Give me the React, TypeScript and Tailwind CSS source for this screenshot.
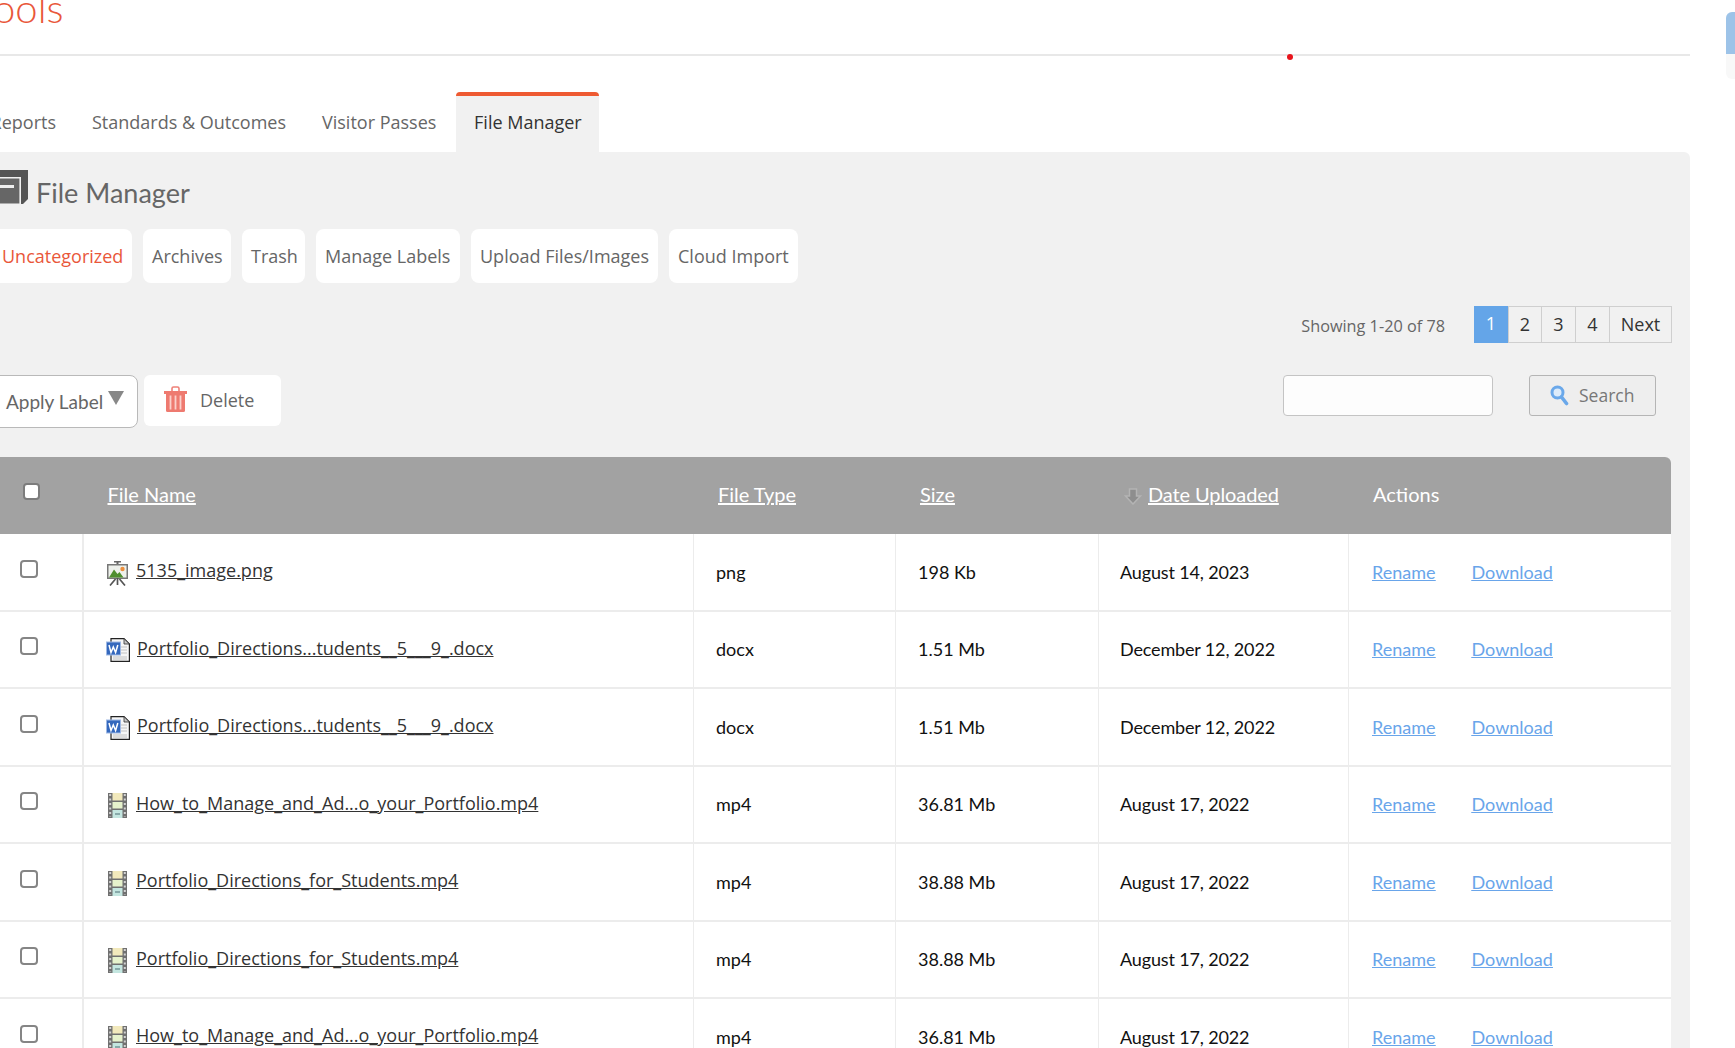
const rowGrid = 'grid grid-cols-[101px_610px_202px_203px_250px_322px] w-[1688px]'

const files = [
  { name: '5135_image.png', type: 'png', size: '198 Kb', date: 'August 14, 2023', icon: 'image' },
  { name: 'Portfolio_Directions...tudents__5___9_.docx', type: 'docx', size: '1.51 Mb', date: 'December 12, 2022', icon: 'word' },
  { name: 'Portfolio_Directions...tudents__5___9_.docx', type: 'docx', size: '1.51 Mb', date: 'December 12, 2022', icon: 'word' },
  { name: 'How_to_Manage_and_Ad...o_your_Portfolio.mp4', type: 'mp4', size: '36.81 Mb', date: 'August 17, 2022', icon: 'film' },
  { name: 'Portfolio_Directions_for_Students.mp4', type: 'mp4', size: '38.88 Mb', date: 'August 17, 2022', icon: 'film' },
  { name: 'Portfolio_Directions_for_Students.mp4', type: 'mp4', size: '38.88 Mb', date: 'August 17, 2022', icon: 'film' },
  { name: 'How_to_Manage_and_Ad...o_your_Portfolio.mp4', type: 'mp4', size: '36.81 Mb', date: 'August 17, 2022', icon: 'film' },
]

function ImageIcon() {
  return (
    <svg width="23" height="25" viewBox="0 0 23 25" className="shrink-0">
      <rect x="8" y="0" width="7" height="1.5" fill="#666" />
      <rect x="10.5" y="1" width="2" height="3" fill="#666" />
      <rect x="1" y="3" width="21" height="15" fill="#777" />
      <rect x="2.5" y="4.5" width="18" height="12" fill="#eef1ec" />
      <path d="M3 16.5l5-8 3.5 4.500 2-2 4 5.500z" fill="#4f8f2f" />
      <circle cx="16.500" cy="8" r="2.200" fill="#ec8f3c" />
      <path d="M11.500 17v7M9.500 18l-5.500 6.500M13.500 18l5.500 6.500" stroke="#555" strokeWidth="1.700" fill="none" />
    </svg>
  )
}

function WordIcon() {
  return (
    <svg width="24" height="24" viewBox="0 0 24 24" className="shrink-0">
      <path d="M5 0.600h13l5.400 5.400v17.400H5z" fill="#f6f6f6" stroke="#222" strokeWidth="1.200" />
      <path d="M18 0.600l5.400 5.400H18z" fill="#c4c4c4" stroke="#333" strokeWidth="0.800" />
      <path d="M15 9h6M15 12h6M15 15h6M7 19h14M7 21h14" stroke="#c2c2c2" strokeWidth="1" />
      <rect x="0.500" y="4" width="14" height="13" fill="#3468bd" stroke="#9db8e4" />
      <path d="M3 7l2 7.500 2.300-5.500 2.300 5.500L11.800 7" fill="none" stroke="#fff" strokeWidth="1.500" />
    </svg>
  )
}

function FilmIcon() {
  return (
    <svg width="23" height="25" viewBox="0 0 23 25" className="shrink-0">
      <rect x="2" y="0" width="19" height="25" fill="#707070" />
      <rect x="6.500" y="0" width="10" height="7.500" fill="#f2e9bc" />
      <rect x="6.500" y="9" width="10" height="6.500" fill="#e6f2cc" />
      <rect x="6.500" y="17" width="10" height="8" fill="#c4e6e0" />
      <path d="M9 21h5" stroke="#8aa" strokeWidth="2" />
      <path d="M4.200 1v23M18.800 1v23" stroke="#d4d4d4" strokeWidth="2" strokeDasharray="2 2.500" />
    </svg>
  )
}

function FileIcon({ kind }: { kind: string }) {
  if (kind === 'image') return <ImageIcon />
  if (kind === 'word') return <WordIcon />
  return <FilmIcon />
}

function RowCheckbox() {
  return (
    <input
      type="checkbox"
      readOnly
      className="appearance-none w-[18px] h-[18px] bg-white border-2 border-[#858585] rounded-[4px] block"
    />
  )
}

function FileRow({ file }: { file: (typeof files)[number] }) {
  return (
    <div className={`${rowGrid} h-[77.5px] bg-white border-b-2 border-[#ececec] font-['Lato',sans-serif] text-[18px] text-[#111]`}>
      <div className="border-r-2 border-[#ececec] pl-[37px] pt-[25.5px]">
        <RowCheckbox />
      </div>
      <div className="border-r border-[#ececec] pl-[22px] pt-[25.5px] flex items-start gap-[7px]">
        <span className="mt-[1px]">
          <FileIcon kind={file.icon} />
        </span>
        <a className="font-['Open_Sans',sans-serif] text-[18px] leading-[24px] -mt-[1.5px] text-[#333] underline whitespace-nowrap">
          {file.name}
        </a>
      </div>
      <div className="border-r border-[#ececec] pl-[22px] pt-[25.5px] leading-[24px]">{file.type}</div>
      <div className="border-r border-[#ececec] pl-[22px] pt-[25.5px] leading-[24px]">{file.size}</div>
      <div className="border-r border-[#ececec] pl-[21px] pt-[25.5px] leading-[24px] tracking-[-0.15px]">{file.date}</div>
      <div className="pl-[23px] pt-[25.5px] leading-[24px] flex gap-[36px] text-[#69a5ea] underline">
        <a>Rename</a>
        <a>Download</a>
      </div>
    </div>
  )
}

const subNav = [
  { label: 'Uncategorized', cls: 'w-[149px] text-[#e9573a] pl-[19px]' },
  { label: 'Archives', cls: 'w-[88px] px-[9px]' },
  { label: 'Trash', cls: 'w-[63px] px-[9px]' },
  { label: 'Manage Labels', cls: 'w-[144px] px-[9px]' },
  { label: 'Upload Files/Images', cls: 'w-[187px] px-[9px]' },
  { label: 'Cloud Import', cls: 'w-[129px] px-[9px]' },
]

export default function App() {
  return (
    <div className="relative w-[1735px] h-[1048px] overflow-hidden bg-white font-['Open_Sans',sans-serif] text-[#666]">
      {/* top right widget */}
      <div className="absolute right-0 top-[12px] w-[9px] h-[67px] rounded-l-[6px] overflow-hidden bg-[#f8f8f8]">
        <div className="h-[42px] bg-[#9dc3e8]" />
      </div>
      <span className="absolute left-[1287px] top-[54px] w-[6px] h-[6px] rounded-full bg-[#e8141c]" />

      <div className="w-[1707px] -ml-[17px]">
        {/* header */}
        <div className="h-[56px] border-b-2 border-[#e8e8e8] overflow-hidden">
          <div className="font-['Lato',sans-serif] font-light text-[40px] leading-[48px] -mt-[16px] ml-[10px] text-[#e9573a] whitespace-nowrap">
            ools
          </div>
        </div>

        {/* tabs */}
        <div className="h-[96px] pt-[36px] flex items-end text-[18px]">
          <a className="ml-[-19px] pb-[17px] leading-[25px] w-[92px] text-right whitespace-nowrap text-[#666]">Reports</a>
          <a className="ml-[36px] pb-[17px] leading-[25px] whitespace-nowrap text-[#666]">Standards &amp; Outcomes</a>
          <a className="ml-[36px] pb-[17px] leading-[25px] whitespace-nowrap text-[#666]">Visitor Passes</a>
          <a className="ml-[20px] w-[143px] h-[60px] bg-[#f1f1f1] border-t-4 border-[#ee5a32] rounded-t-[4px] pt-[14px] leading-[25px] text-center text-[#333]">
            File Manager
          </a>
        </div>

        {/* panel */}
        <div className="h-[900px] bg-[#f1f1f1] rounded-tr-[6px] pt-[18px]">
          <div className="flex items-start h-[59px] pl-[17px]">
            <svg width="29" height="36" viewBox="0 0 29 36" className="shrink-0">
              <path d="M0 0h28v29l-5 5H0z" fill="#555" />
              <path d="M0 7h21v28H0z" fill="#666" />
              <path d="M0 7.800h20.200v26.500H0" fill="none" stroke="#f1f1f1" strokeWidth="1.600" />
              <rect x="0" y="15" width="14" height="3" fill="#eee" />
            </svg>
            <h1 className="font-['Lato',sans-serif] font-normal text-[27px] leading-[34px] ml-[7px] mt-[6px] text-[#666]">File Manager</h1>
          </div>

          <div className="flex gap-[11px] text-[18px]">
            {subNav.map((item) => (
              <a key={item.label} className={`h-[54px] leading-[54px] bg-white rounded-[8px] whitespace-nowrap ${item.cls}`}>
                {item.label}
              </a>
            ))}
          </div>

          <div className="flex justify-end items-start pr-[18px] mt-[23px] h-[36px]">
            <span className="text-[16.25px] leading-[36px] mt-[2px] mr-[29px]">Showing 1-20 of 78</span>
            <div className="flex text-[18px] text-[#333] text-center leading-[34px] h-[37px]">
              <a className="w-[34px] bg-[#64a5e8] text-white">1</a>
              <a className="w-[34px] border border-[#cfcfcf]">2</a>
              <a className="w-[34px] border-y border-r border-[#cfcfcf]">3</a>
              <a className="w-[34px] border-y border-r border-[#cfcfcf]">4</a>
              <a className="w-[62px] border-y border-r border-[#cfcfcf]">Next</a>
            </div>
          </div>

          <div className="flex items-start h-[82px] mt-[33px]">
            <div className="w-[155px] h-[53px] bg-white border border-[#b9b9b9] rounded-r-[8px] flex items-start pl-[22px] text-[19px] font-['Lato',sans-serif]">
              <span className="mt-[14px] leading-[24px]">Apply Label</span>
              <span className="mt-[15px] ml-[5px] w-0 h-0 border-x-[8.5px] border-x-transparent border-t-[14px] border-t-[#888]" />
            </div>
            <a className="w-[137px] h-[51px] ml-[6px] bg-white rounded-[6px] flex items-start pt-[11px] pl-[20px] text-[18px]">
              <svg width="23" height="26" viewBox="0 0 23 26" className="shrink-0">
                <path d="M8 5V2.500Q8 1 9.500 1h4Q15 1 15 2.500V5" fill="none" stroke="#ee8178" strokeWidth="1.600" />
                <rect x="0" y="5" width="23" height="3" fill="#ee7a70" />
                <path d="M2 8h19v16.500q0 1.500-1.500 1.500h-16Q2 26 2 24.500z" fill="#ee7a70" />
                <path d="M6.500 9.500v14M11.500 9.500v14M16.500 9.500v14" stroke="#fbd0cb" strokeWidth="1.800" />
              </svg>
              <span className="ml-[13px] leading-[29px] text-[#666]">Delete</span>
            </a>
            <input
              readOnly
              className="ml-[1002px] w-[210px] h-[41px] bg-[#fdfdfd] border border-[#c4c4c4] rounded-[4px]"
            />
            <a className="ml-[36px] w-[127px] h-[41px] bg-[#eeeeee] border border-[#b5b5b5] rounded-[3px] flex items-center pl-[20px] text-[17.500px]">
              <svg width="19" height="21" viewBox="0 0 19 21" className="shrink-0">
                <circle cx="7.500" cy="7.500" r="5.500" fill="#dcebfa" stroke="#6aa8ea" strokeWidth="3" />
                <path d="M11.500 12l5 6.500" stroke="#6aa8ea" strokeWidth="3.600" strokeLinecap="round" />
              </svg>
              <span className="ml-[10px] text-[#777]">Search</span>
            </a>
          </div>

          {/* table header */}
          <div className={`${rowGrid} h-[77px] bg-[#a2a2a2] rounded-tr-[6px] font-['Lato',sans-serif] text-[20px] text-white leading-[26px] pt-[24px]`}>
            <div className="pl-[40px] pt-[2px]">
              <input type="checkbox" readOnly className="appearance-none w-[17px] h-[17px] bg-white border-2 border-[#7c7c7c] rounded-[4px] block" />
            </div>
            <a className="pl-[23.500px] underline">File Name</a>
            <a className="pl-[24px] underline">File Type</a>
            <a className="pl-[24px] underline">Size</a>
            <div className="pl-[25px] flex items-start gap-[6px]">
              <svg width="18" height="17" viewBox="0 0 18 17" className="shrink-0 mt-[7px]">
                <path d="M5.500 1h7v7h4l-7.500 8-7.500-8h4z" fill="#8e8e8e" stroke="#b4b4b4" strokeWidth="1.500" />
              </svg>
              <a className="underline tracking-[-0.1px]">Date Uploaded</a>
            </div>
            <div className="pl-[24px]">Actions</div>
          </div>

          {files.map((file, i) => (
            <FileRow key={i} file={file} />
          ))}
        </div>
      </div>
    </div>
  )
}
